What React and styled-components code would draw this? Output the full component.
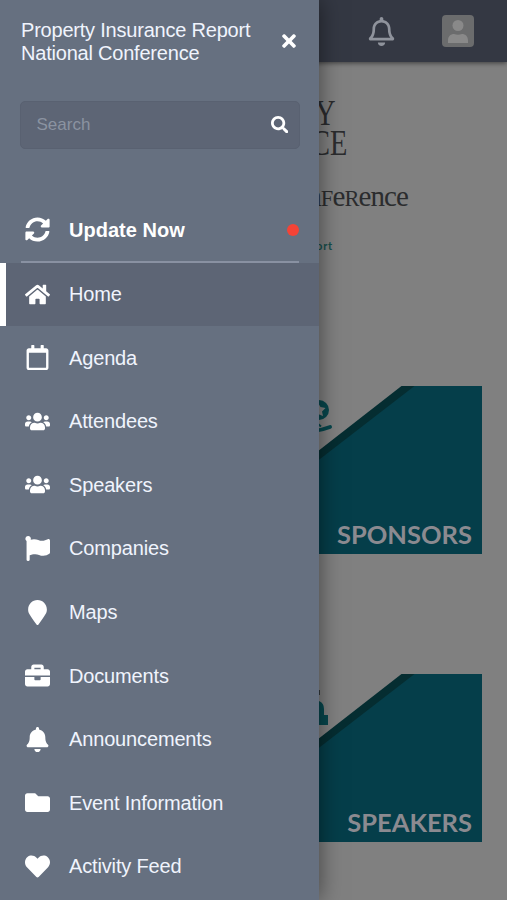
import React from 'react';
import styled, { createGlobalStyle, css } from 'styled-components';
import {
  FaSyncAlt, FaHome, FaRegCalendar, FaUsers, FaFlag, FaMapMarker, FaBriefcase,
  FaBell, FaFolder, FaHeart, FaTimes, FaSearch, FaRegBell,
} from 'react-icons/fa';

const GlobalStyle = createGlobalStyle`
  *, *::before, *::after { box-sizing: border-box; }
  body { margin: 0; background: #808080; overflow: hidden; }
`;

const Screen = styled.div`
  position: relative;
  width: 507px;
  height: 900px;
  overflow: hidden;
  background: #808080;
  font-family: "Liberation Sans", Arial, sans-serif;
`;

/* Dimmed page behind the drawer */
const Page = styled.main`
  display: flex;
  flex-direction: column;
  height: 100%;
`;

const TopBar = styled.header`
  display: flex;
  align-items: center;
  justify-content: flex-end;
  gap: 46px;
  height: 62px;
  flex: none;
  padding-right: 33px;
  background: #343843;
  box-shadow: 0 1px 5px rgba(0, 0, 0, 0.55);
  color: #8f939c;
`;

const BellIcon = styled(FaRegBell)`
  display: block;
  width: 29px;
  height: 29px;
`;

const Avatar = styled.div`
  display: flex;
  align-items: center;
  justify-content: center;
  width: 32px;
  height: 32px;
  border-radius: 4px;
  background: #6b6c6d;
`;

const Brand = styled.section`
  display: flex;
  flex-direction: column;
  height: 324px;
  flex: none;
  padding: 37px 0 0 311px;
  font-family: "Liberation Serif", "Times New Roman", serif;
  color: #2b2c2e;
  white-space: nowrap;
`;

const BrandName = styled.div`
  width: 60px;
  height: 59px;
  font-size: 36px;
  line-height: 29.5px;
  text-indent: 5px;
  transform: scaleX(0.79);
  transform-origin: left;
`;

const Subtitle = styled.div`
  display: flex;
  align-items: baseline;
  justify-content: flex-end;
  width: 97px;
  height: 34px;
  margin-top: 21px;
  font-size: 29px;
  line-height: 34px;
  letter-spacing: -0.9px;
`;

const SmallCap = styled.span`
  font-size: 22.5px;
`;

const Credit = styled.div`
  display: flex;
  justify-content: flex-end;
  width: 22px;
  margin-top: 25px;
  font: 700 11px/16px Lato, sans-serif;
  letter-spacing: 0.8px;
  color: #164f4c;
`;

const Tiles = styled.section`
  display: flex;
  flex-direction: column;
  align-items: flex-end;
  gap: 120px;
  padding-right: 25px;
`;

const Tile = styled.article`
  display: grid;
  width: 228px;
  height: 168px;

  > * { grid-area: 1 / 1; }
`;

const TileLabel = styled.h2`
  align-self: end;
  justify-self: end;
  z-index: 1;
  margin: 0;
  padding: 0 10px 4px 0;
  font: 700 25.5px/32px Lato, sans-serif;
  color: #8b8a90;
`;

/* Drawer */
const Drawer = styled.aside`
  position: absolute;
  inset: 0 auto 0 0;
  display: flex;
  flex-direction: column;
  width: 319px;
  background: #667080;
  box-shadow: 0 0 22px rgba(0, 0, 0, 0.5);
  color: #f0f4fd;
`;

const DrawerHeader = styled.div`
  display: flex;
  align-items: flex-start;
  justify-content: space-between;
  height: 101px;
  flex: none;
  padding: 19px 20.5px 0 21px;
`;

const Title = styled.h1`
  margin: 0;
  width: 240px;
  font-size: 20px;
  font-weight: 400;
  line-height: 23px;
  letter-spacing: -0.21px;
`;

const CloseButton = styled.button`
  display: flex;
  margin-top: 12px;
  padding: 0;
  border: 0;
  background: none;
  color: #fff;
  font-size: 20px;
`;

const SearchBox = styled.div`
  display: flex;
  align-items: center;
  justify-content: space-between;
  height: 48px;
  flex: none;
  margin: 0 19px 0 20px;
  padding: 0 11px 0 15.5px;
  border: 1px solid #596171;
  border-radius: 5px;
  background: #5d6575;
  font-size: 17px;
  color: #8b93a1;

  svg { color: #fff; font-size: 17.5px; margin-bottom: 1px; }
`;

const UpdateRow = styled.div`
  display: flex;
  align-items: center;
  height: 66px;
  flex: none;
  margin: 48px 20px 0 21px;
  padding-top: 1px;
  border-bottom: 2px solid #8991a2;
  font-weight: 700;
  color: #fff;
`;

const Dot = styled.span`
  width: 12px;
  height: 12px;
  margin-left: auto;
  border-radius: 50%;
  background: #f44336;
`;

const IconSlot = styled.span`
  display: flex;
  align-items: center;
  justify-content: center;
  width: 25px;
  margin-right: 19px;
  color: #fff;
  font-size: 25px;
`;

const Label = styled.span`
  font-size: 20px;
  line-height: 24px;
  letter-spacing: ${(p) => p.$spacing ?? -0.15}px;
`;

const Menu = styled.nav`
  display: flex;
  flex-direction: column;
  margin-top: -0.5px;
`;

const MenuItem = styled.div`
  display: flex;
  align-items: center;
  height: 63.55px;
  flex: none;
  padding-left: 19px;
  border-left: 6px solid transparent;
  ${(p) => p.$active && css`
    border-left-color: #fff;
    background: #5d6575;
  `}
`;

const UpdateIcon = styled(IconSlot)`
  margin-left: 4px;
`;

const items = [
  { label: 'Home', Icon: FaHome, active: true },
  { label: 'Agenda', Icon: FaRegCalendar },
  { label: 'Attendees', Icon: FaUsers },
  { label: 'Speakers', Icon: FaUsers },
  { label: 'Companies', Icon: FaFlag },
  { label: 'Maps', Icon: FaMapMarker },
  { label: 'Documents', Icon: FaBriefcase },
  { label: 'Announcements', Icon: FaBell },
  { label: 'Event Information', Icon: FaFolder },
  { label: 'Activity Feed', Icon: FaHeart },
];

function TileArt({ children }) {
  return (
    <svg width="228" height="168" viewBox="0 0 228 168" aria-hidden="true">
      <path d="M147.500 0H228V168H0V115Z" fill="#052d31" />
      <path d="M160.500 0H228V168H0V124Z" fill="#053e4a" />
      {children}
    </svg>
  );
}

function AwardGlyph() {
  return (
    <g>
      <circle cx="65" cy="24" r="10" fill="#07474d" />
      <path d="M64 17l2.500 4 5 1-3.500 3.500 1 4.500-5-2-5 2 1-5-4-3.500 5.500-.5Z" fill="#808080" />
      <path d="M62 44.500q6-.5 14-3.500" fill="none" stroke="#07474d" strokeWidth="4" strokeLinecap="round" />
      <path d="M64 38l3 2.500" stroke="#07474d" strokeWidth="2" />
    </g>
  );
}

function SpeakerGlyph() {
  return (
    <g fill="#07474d">
      <path d="M60 27h5q5 2 5 8v6h4v10H60Z" />
      <path d="M62 16h4v5h-4Z" fill="#343a3c" />
    </g>
  );
}

export default function App() {
  return (
    <Screen>
      <GlobalStyle />
      <Page>
        <TopBar>
          <BellIcon />
          <Avatar>
            <svg width="20" height="24" viewBox="0 0 20 24" fill="#898989">
              <circle cx="10" cy="6.500" r="5.500" />
              <path d="M0 24v-2.500C0 17 3 15 6 15q4 1.500 8 0c3 0 6 2 6 6.500V24Z" />
            </svg>
          </Avatar>
        </TopBar>
        <Brand>
          <BrandName>Y<br />CE</BrandName>
          <Subtitle>n<SmallCap>F</SmallCap>e<SmallCap>R</SmallCap>ence</Subtitle>
          <Credit>ort</Credit>
        </Brand>
        <Tiles>
          <Tile>
            <TileArt><AwardGlyph /></TileArt>
            <TileLabel>SPONSORS</TileLabel>
          </Tile>
          <Tile>
            <TileArt><SpeakerGlyph /></TileArt>
            <TileLabel>SPEAKERS</TileLabel>
          </Tile>
        </Tiles>
      </Page>
      <Drawer>
        <DrawerHeader>
          <Title>Property Insurance Report National Conference</Title>
          <CloseButton aria-label="Close menu"><FaTimes /></CloseButton>
        </DrawerHeader>
        <SearchBox>
          <span>Search</span>
          <FaSearch />
        </SearchBox>
        <UpdateRow>
          <UpdateIcon><FaSyncAlt /></UpdateIcon>
          <Label $spacing={0.03}>Update Now</Label>
          <Dot />
        </UpdateRow>
        <Menu>
          {items.map(({ label, Icon, active }) => (
            <MenuItem key={label} $active={active}>
              <IconSlot><Icon /></IconSlot>
              <Label>{label}</Label>
            </MenuItem>
          ))}
        </Menu>
      </Drawer>
    </Screen>
  );
}
